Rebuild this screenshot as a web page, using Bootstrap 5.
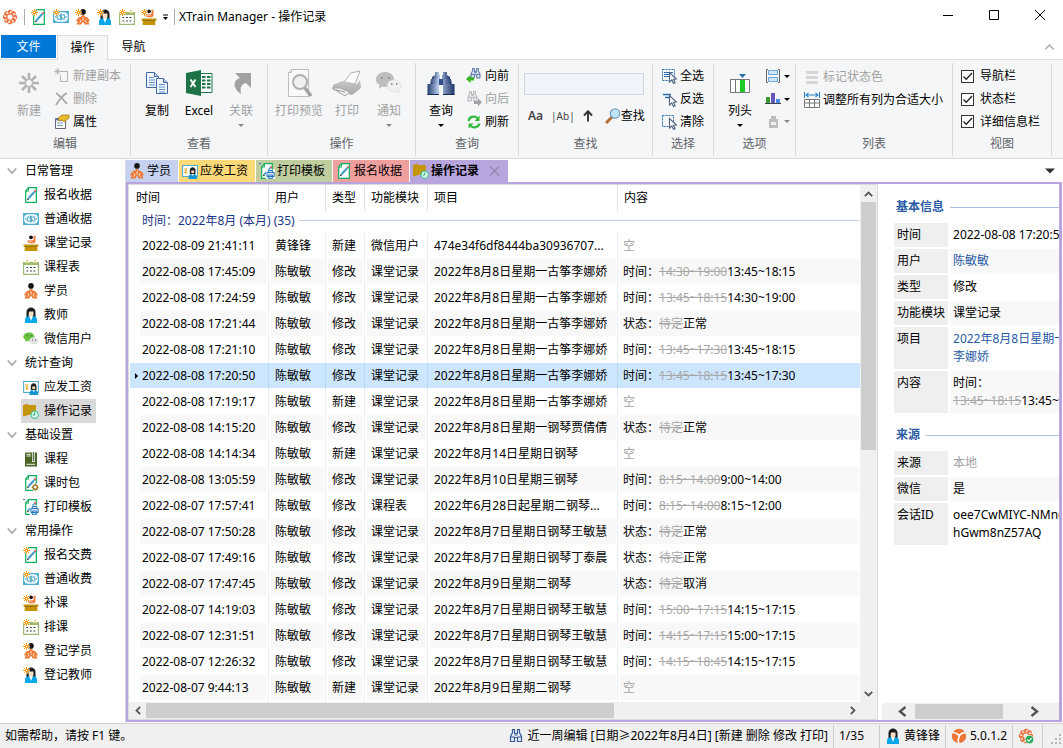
<!DOCTYPE html>
<html lang="zh-CN">
<head>
<meta charset="utf-8">
<meta name="viewport" content="width=device-width, initial-scale=1">
<title>XTrain Manager - 操作记录</title>
<link href="https://cdn.jsdelivr.net/npm/bootstrap@5.3.0/dist/css/bootstrap.min.css" rel="stylesheet">
<script defer src="https://cdn.jsdelivr.net/npm/bootstrap@5.3.0/dist/js/bootstrap.bundle.min.js"></script>
<style>
  :root { --line:#dadbdc; --accent:#b9a5de; --link:#2a5ba4; }
  body { font:12px/18px "Noto Sans","Noto Sans CJK SC",sans-serif; color:#000; background:#fff; }
  button { font:inherit; color:inherit; background:none; border:0; padding:0; white-space:nowrap; }
  a { color:var(--link); text-decoration:none; }
  svg { display:block; flex:none; }
  .s16 { width:16px; height:16px; }
  .s28 { width:28px; height:28px; }
  .titlebar { height:35px; }
  .quick { gap:6px; padding:9px 0 0 2px; }
  .vbar { width:1px; height:16px; background:#aaa; }
  .capbtn { width:46px; height:30px; }
  .rtabs { height:24px; }
  .rtab { height:24px; width:51px; position:relative; z-index:1; }
  .rtab.file { width:55px; margin:0 1px; background:#0078d7; color:#fff; height:23px; }
  .rtab.active { border:1px solid var(--line); border-bottom:0; background:#f5f6f7; height:25px; }
  .ribbon { background:#f5f6f7; border:solid var(--line); border-width:1px 0; height:100px; padding:3px 0 2px; }
  .grp { border-right:1px solid var(--line); height:93px; display:flex; flex-direction:column; flex:none; }
  .grp-main { display:flex; height:70px; padding:2px 4px 0 5px; }
  .grp-name { text-align:center; color:#5f6368; margin:auto 0 3px; }
  .big { width:42px; display:flex; flex-direction:column; align-items:center; padding-top:4px; flex:none; height:66px; }
  .big span { margin-top:5px; }
  .stack { display:flex; flex-direction:column; }
  .stack > * { height:23px; display:flex; align-items:center; gap:3px; }
  .checks > * { gap:6px; }
  .off { color:#a2a2a2; }
  .off svg { opacity:.75; }
  .caret { width:0; height:0; border:solid transparent; border-width:3px 3px 0; border-top-color:#000; flex:none; }
  .off .caret { border-top-color:#888; }
  .big .caret { margin-top:4px; }
  .find { width:120px; height:22px; border:1px solid #d5d9de; background:#eff4fb; outline:0; padding:0 4px; flex:none; }
  .find-row { gap:8px; padding-left:4px; color:#444; }
  .whole { font-size:10px; }
  .tick { appearance:none; width:13px; height:13px; border:1px solid #333; background:#fff; margin:0; border-radius:0; flex:none; }
  .tick:checked { background:#fff url("data:image/svg+xml,%3Csvg xmlns='http://www.w3.org/2000/svg' viewBox='0 0 11 11'%3E%3Cpath d='M1.5 5.5 4.3 8.3 10 2' fill='none' stroke='%23222' stroke-width='1.3'/%3E%3C/svg%3E"); }
  .tree { width:126px; flex:none; border-right:1px solid #d8dade; }
  .tree-head { height:24px; gap:8px; padding-left:7px; }
  .tree-item { height:24px; display:flex; align-items:center; gap:5px; margin-left:21px; padding:0 4px 0 2px; width:max-content; color:#000; }
  .tree-item.active { background:#d9d9d9; }
  .docs { height:23px; padding-top:1px; gap:1px; }
  .doc { height:22px; display:flex; align-items:center; gap:2px; padding:0 7px 0 3px; }
  .frame { border:2px solid var(--accent); border-width:2px 3px 2px 2px; margin-right:1px; }
  .grid-pane { border:1px solid var(--line); min-width:0; }
  .grid-box { padding-left:1px; }
  .log { width:100%; table-layout:fixed; border-collapse:separate; border-spacing:0; }
  .log th { height:26px; font-weight:400; padding:0 6px; border-right:1px solid #e2e2e2; }
  .log td { height:26px; padding:0 6px; white-space:nowrap; overflow:hidden; text-overflow:ellipsis; border-right:1px solid #e6effa; }
  .log td:last-child { padding-left:5px; }
  .log th:last-child,.log td:last-child { border-right:0; }
  .log .rows tr:nth-child(even) td { background:linear-gradient(#f8f8f8,#f8f8f8) no-repeat 2px 0/calc(100% - 3px) 25px; }
  .log .rows td:first-child { padding-left:12px; position:relative; }
  .log .rows tr:nth-child(even) td:first-child { background-position:10px 0; background-size:calc(100% - 11px) 25px; }
  .log .rows tr.sel td, .log .rows tr.sel td:first-child { background:linear-gradient(#cce6ff,#cce6ff) no-repeat 0 0/100% 25px; background-clip:border-box; background-origin:border-box; border-color:#b9d9f6; }
  .sel td:first-child::before { content:""; position:absolute; left:5px; top:10px; border:solid transparent; border-width:3px 0 3px 3px; border-left-color:#000; }
  .log .band td { padding:0 0 3px 12px; height:22px; color:#1c3687; border:0; }
  .rule { height:1px; flex:1; background:#c6d2e8; }
  .log del, .kv del { color:#a8a8a8; }
  .none { color:#a2a2a2; }
  .sb { background:#f0f0f0; display:flex; align-items:center; }
  .sb.v { width:17px; flex-direction:column; }
  .sb.h { height:17px; }
  .sb button { width:17px; height:17px; display:grid; place-items:center; flex:none; }
  .thumb { background:#cdcdcd; }
  .side { width:181px; flex:none; overflow:hidden; }
  .side-in { width:240px; padding:11px 0 0 16px; }
  .side h2 { font-size:12px; line-height:24px; font-weight:700; color:var(--link); margin:0; padding-left:2px; display:flex; align-items:center; gap:6px; height:24px; }
  .side h2::after { content:""; flex:1; height:1px; background:#a9bde0; }
  .kv { border-collapse:separate; border-spacing:0; width:224px; margin:4px 0 8px; }
  .kv th,.kv td { border:solid #fff; border-width:0 0 2px; padding:3px; vertical-align:top; }
  .kv th { font-weight:400; background:#efefef; width:56px; border-right-width:2px; white-space:nowrap; }
  .kv tr:nth-child(even) td { background:#f8f8f8; }
  .status { background:#f0f0f0; border-top:1px solid #d0d0d0; height:25px; padding-left:5px; }
  .cell { height:23px; display:flex; align-items:center; gap:3px; padding:0 5px; border-right:1px solid #ccc; flex:none; white-space:nowrap; }
</style>
</head>
<body>
<svg width="0" height="0" class="position-absolute" aria-hidden="true">
  <defs>
    <linearGradient id="steel" x2="1"><stop stop-color="#253d70"/><stop offset=".4" stop-color="#b9cdec"/><stop offset="1" stop-color="#1e3668"/></linearGradient>
    <linearGradient id="greyfade" x2="0" y2="1"><stop stop-color="#b9b9b9"/><stop offset="1" stop-color="#8f8f8f"/></linearGradient>
    <path id="blade" d="M6.300 4.600C4.600 3.300 5.500.9 8.200.8c1.400 0 2 .7 2.100 1.300-1.700-.5-2.600.5-2.300 2z"/>
  </defs>
  <symbol id="spark" viewBox="0 0 16 16"><path d="M3.500 0v7M0 3.500h7M1 1l5 5M6 1 1 6" stroke="#fff" stroke-width="2.200" opacity=".6"/><path d="M3.500 0v7M0 3.500h7M1 1l5 5M6 1 1 6" stroke="#f5a11c"/><path d="M3 3h1v1H3z" fill="#fff"/></symbol>
  <symbol id="receipt" viewBox="0 0 16 16"><path d="M5.500.7h7.800v14.600H2.700V4z" fill="#fff" stroke="#0caf5a" stroke-width="1.200"/><path d="M2.700 4.200h2.800V.7" fill="none" stroke="#0caf5a" stroke-width=".9"/><path d="m5.300 11.500 6-6.500" stroke="#3b9cc9" stroke-width="1.900"/><path d="m11.500 4.800 1.200-1.300" stroke="#c05a62" stroke-width="1.900"/><path d="m4 13.200.6-2 1.400 1.300z" fill="#111"/></symbol>
  <symbol id="money" viewBox="0 0 16 16"><path d="M.6 2.600h14.800v10.800H.6z" fill="#f2fafd" stroke="#4fadcf" stroke-width="1.100"/><path d="M1 3h2.500v1H2v1.500H1zM15 3h-2.500v1H14v1.500h1zM1 13h2.500v-1H2v-1.500H1zM15 13h-2.500v-1H14v-1.500h1z" fill="#4fadcf"/><path d="M5.500 5 3.900 8l1.600 3M10.500 5l1.600 3-1.600 3" fill="none" stroke="#4fadcf" stroke-width="1.200"/><path d="M9.700 6.200C8 5.200 6.300 6 6.500 7S9.500 8 9.500 9.200 7.500 10.500 6.200 9.700M8 4.700v6.600" fill="none" stroke="#2f97bd"/><path d="M2 8h1M13 8h1" stroke="#2f97bd"/></symbol>
  <symbol id="class" viewBox="0 0 16 16"><circle cx="8" cy="2.300" r="1.900" fill="#111"/><path d="M4.500 5.500 10.500 5V.8h2v6l-1.500 1.500H7L4.500 7z" fill="#ef7a3a"/><path d="M6 6.200h4" stroke="#fff" stroke-width=".6"/><path d="M.5 9.500h15v2h-1.200V16H1.700v-4.500H.5z" fill="#c49408"/><path d="M1.700 11.500h12.600" stroke="#8f6b00" stroke-width=".8"/></symbol>
  <symbol id="cal" viewBox="0 0 16 16"><path d="M.6 3.500h14.800v11.900H.6z" fill="#fff" stroke="#9cb872" stroke-width="1.200"/><path d="M.6 3h14.800v3H.6z" fill="#9dbb69"/><path d="M4 .5v3.500M12 .5v3.500" stroke="#fff" stroke-width="3"/><path d="M4 .5V4M12 .5V4" stroke="#e3c970" stroke-width="1.400"/><path d="M3.500 8.500h9.500M3.500 12h9.500" stroke="#333" stroke-width="1.200" stroke-dasharray="1.800 1.700"/></symbol>
  <symbol id="stud" viewBox="0 0 16 16"><circle cx="8" cy="2.900" r="2.800" fill="#151515"/><path d="M8 6c1 0 1.600.8 2 1.800l2.200.4c1.300 1 2.300 2.800 2.800 4.300l-2-.3 1.500 3.300H9.800L8 12.500l-1.800 3H1.500L3 12.200l-2 .3c.5-1.500 1.500-3.300 2.800-4.300L6 7.800C6.400 6.800 7 6 8 6z" fill="#ee7832"/><path d="m4.500 10 1.500 1.800-1.500 2M11.500 10 10 11.800l1.500 2M8 8v3.500" fill="none" stroke="#fff" stroke-width=".8"/></symbol>
  <symbol id="teach" viewBox="0 0 16 16"><path d="M3.500 10V5C3.500-1 12.500-1 12.500 5v5z" fill="#1b1b1b"/><path d="M6 4.500h4.500V8L9.500 10h-3L5.500 8z" fill="#f7dfc6"/><path d="M2 16v-3.500c0-2 1.800-3.200 3.800-3.200L8 12l2.200-2.700c2 0 3.800 1.200 3.800 3.200V16z" fill="#08a7ec"/><path d="M6.300 9.300 8 14l1.700-4.700z" fill="#fff"/></symbol>
  <symbol id="chat" viewBox="0 0 16 16"><path d="M6 1.500c3 0 5.500 2 5.500 4.300S9 10 6 10l-1.500-.2L2.200 11l.5-2C1.200 8.200.3 7.200.3 5.800c0-2.300 2.500-4.300 5.700-4.300z" fill="#69c13f"/><path d="M10.800 6.200c2.700 0 4.700 1.600 4.700 3.600 0 1.200-.7 2-1.600 2.700l.3 1.500-1.700-.9c-3.500.9-6.200-1-6.200-3.300 0-2 2-3.600 4.500-3.600z" fill="#e4e4e4"/><path d="M4 4.700h1M7.500 4.700h1M9 9h1M12 9h1" stroke="#444"/></symbol>
  <symbol id="salary" viewBox="0 0 16 16"><path d="M.6 2.500h14.800v11H.6z" fill="#fff" stroke="#54add0" stroke-width="1.100"/><path d="m2.500 5 1.300 2L5 5M3.800 7v4M2.500 8h2.700M2.500 9.500h2.700" stroke="#efa523" fill="none" stroke-width=".9"/><path d="M7.800 11V7.500c0-4.300 5.700-4.300 5.700 0V11z" fill="#222"/><path d="M9.300 7.500h2.800v2.500H9.300z" fill="#f7dfc6"/><path d="M6.500 16v-3l2.500-2.300 1.700 2 1.700-2L15 13v3z" fill="#1696cf"/></symbol>
  <symbol id="folder" viewBox="0 0 16 16"><path d="M0 2 4.500.8 5.500 2H13v8L0 13.500z" fill="#c5950a"/><circle cx="11.700" cy="11.700" r="3.600" fill="#e8fff5" stroke="#46c796" stroke-width="1.200"/><path d="M11.700 9.500v2.500h-2" fill="none" stroke="#1b9b6d"/></symbol>
  <symbol id="book" viewBox="0 0 16 16"><path d="M2 1.500h12v14H2z" fill="#4d6427"/><path d="M3.500 3.300h4.300M3.500 5h4.300M3.500 13.300h8.500" stroke="#fff" stroke-width=".9"/><path d="M10.500 0v11" stroke="#fff" stroke-width="2.600"/><path d="M10.500 1v9" stroke="#58714b" stroke-width="1.200"/></symbol>
  <symbol id="pack" viewBox="0 0 16 16"><use href="#receipt"/><circle cx="12.200" cy="12.200" r="3.700" fill="#fff"/><circle cx="12.200" cy="12.200" r="2.100" fill="none" stroke="#96701a" stroke-width="1.300"/><path d="M12.200 8.700v1.500M12.200 14.200v1.500M8.700 12.200h1.500M14.200 12.200h1.500M9.800 9.800l1 1M13.600 13.600l1 1M14.600 9.800l-1 1M10.800 13.600l-1 1" stroke="#96701a"/></symbol>
  <symbol id="tmpl" viewBox="0 0 16 16"><use href="#receipt"/><path d="M6.800 6.500H16V16H6.800z" fill="#fff"/><path d="M9.300 9.500v-2h4.400v2M7.900 9.500h7.300v4H7.900zM9.300 12h4.400v3.300H9.300z" fill="#dceefb" stroke="#2675b8"/><path d="M0 .6h2" stroke="#2675b8"/></symbol>
  <symbol id="logo" viewBox="0 0 16 16"><g fill="#ec7340"><use href="#blade"/><use href="#blade" transform="rotate(45 8 8)"/><use href="#blade" transform="rotate(90 8 8)"/><use href="#blade" transform="rotate(135 8 8)"/><use href="#blade" transform="rotate(180 8 8)"/><use href="#blade" transform="rotate(225 8 8)"/><use href="#blade" transform="rotate(270 8 8)"/><use href="#blade" transform="rotate(315 8 8)"/></g><circle cx="8" cy="8" r="3.200" fill="none" stroke="#ec7340" stroke-width="1.300"/></symbol>
  <symbol id="bino" viewBox="0 0 28 28"><path d="M8 3h4v3h1v5H5V8l3-2zM16 3h4v3l3 2v3h-8V6h1z" fill="url(#steel)"/><path d="M4 10h8.500v6H3zM15.500 10H24l1 6h-9.500z" fill="url(#steel)"/><path d="M12 10h4v6h-4z" fill="#34508a"/><path d="M.5 15H12v11H.5zM16 15h11.500v11H16z" fill="url(#steel)"/><path d="M.5 25.500H12M16 25.500h11.500" stroke="#142a58"/></symbol>
  <symbol id="binoline" viewBox="0 0 16 16"><path d="M4.500 1.500h2v4h3v-4h2v3l2 4v5h-4V9.500h-3v4h-4v-5l2-4zM2.500 9h4M9.500 9h4M6.500 7h3" fill="#e6ecf7" stroke="currentColor" stroke-width="1.200"/></symbol>
  <symbol id="cursor" viewBox="0 0 16 16"><path d="M8.500 4.500v9.500l2.300-2 1.700 3.500 1.600-.8-1.700-3.400 3-.3z" fill="#fff" stroke="#52677f" stroke-width="1.100"/></symbol>
  <symbol id="chev" viewBox="0 0 10 8"><path d="m.8 1.500 4.200 4.500 4.200-4.500" fill="none" stroke="#a8a8a8" stroke-width="1.800"/></symbol>
</svg>

<div class="d-flex flex-column vh-100 overflow-hidden">
  <header class="titlebar d-flex align-items-start flex-shrink-0">
    <div class="quick d-flex align-items-center">
      <svg class="s16"><use href="#logo"/></svg>
      <span class="vbar"></span>
      <button aria-label="报名交费"><svg class="s16"><use href="#receipt"/><use href="#spark"/></svg></button>
      <button aria-label="普通收费"><svg class="s16"><use href="#money"/><use href="#spark"/></svg></button>
      <button aria-label="登记学员"><svg class="s16"><use href="#stud"/><use href="#spark"/></svg></button>
      <button aria-label="登记教师"><svg class="s16"><use href="#teach"/><use href="#spark"/></svg></button>
      <button aria-label="排课"><svg class="s16"><use href="#cal"/><use href="#spark"/></svg></button>
      <button aria-label="补课"><svg class="s16"><use href="#class"/><use href="#spark"/></svg></button>
      <button aria-label="自定义"><svg width="5" height="7" viewBox="0 0 6 7"><path d="M0 .5h6" stroke="#000" stroke-width="1.200"/><path d="M0 3h6L3 6.500z"/></svg></button>
      <span class="vbar"></span>
    </div>
    <div class="ps-1 pt-2">XTrain Manager - 操作记录</div>
    <div class="ms-auto d-flex">
      <button class="capbtn d-grid" aria-label="最小化"><svg class="m-auto" width="10" height="10"><path d="M0 5.500h10" stroke="#000"/></svg></button>
      <button class="capbtn d-grid" aria-label="最大化"><svg class="m-auto" width="10" height="10"><path d="M.5.5h9v9h-9z" fill="none" stroke="#000"/></svg></button>
      <button class="capbtn d-grid" aria-label="关闭"><svg class="m-auto" width="10" height="10"><path d="m0 0 10 10M10 0 0 10" stroke="#000"/></svg></button>
    </div>
  </header>

  <nav class="rtabs d-flex flex-shrink-0">
    <button class="rtab file">文件</button>
    <button class="rtab active">操作</button>
    <button class="rtab">导航</button>
    <button class="ms-auto pe-2" aria-label="折叠功能区"><svg width="11" height="8" viewBox="0 0 10 8"><path d="m.8 6.500 4.200-4.500 4.200 4.500" fill="none" stroke="#b4b4b4" stroke-width="1.800"/></svg></button>
  </nav>

  <section class="ribbon d-flex flex-shrink-0">
    <div class="grp" style="width:131px">
      <div class="grp-main ps-2">
        <button class="big off"><svg class="s28" viewBox="0 0 28 28"><g stroke="#9c9c9c" stroke-width="2.600"><path d="M14 4v7M14 17v7M4 14h7M17 14h7M7 7l5 5M16 16l5 5M21 7l-5 5M12 16l-5 5"/></g></svg><span>新建</span></button>
        <div class="stack ms-1">
          <button class="off"><svg class="s16"><path d="M6.500 3.500h7v10h-7v-6" fill="none" stroke="#999"/><path d="M3.500 0v7M0 3.500h7M1 1l5 5M6 1 1 6" stroke="#999" stroke-width=".8"/></svg>新建副本</button>
          <button class="off"><svg class="s16"><path d="M2 2c3 2 8 7 11 11M13 2C9 4 5 9 2 14" fill="none" stroke="#8f8f8f" stroke-width="1.800"/></svg>删除</button>
          <button><svg class="s16"><path d="M1.500 4.500h10v10h-10z" fill="#fff" stroke="#667"/><path d="M1.500 5.500h10" stroke="#4b7bc0" stroke-width="2"/><path d="M3 9h6M3 11.500h6" stroke="#7892bd"/><path d="m4 4 4-3h7v3l-5 4-2-2-3 1z" fill="#e6bb2e" stroke="#a77400" stroke-width=".7"/></svg>属性</button>
        </div>
      </div>
      <div class="grp-name">编辑</div>
    </div>

    <div class="grp" style="width:137px">
      <div class="grp-main">
        <button class="big"><svg class="s28" viewBox="0 0 28 28"><g fill="#f1f6fe" stroke="#4269a5"><path d="M3.500 3.500h8l4 4v11h-12z"/><path d="M13.500 9.500h7l4 4v11h-11z"/><path d="M20.500 9.500v4h4M11.500 3.500v4h4" fill="#b9d0f0"/></g><path d="M6 8.500h5M6 11h6M6 13.500h6M6 16h6M16 15.500h6M16 18h6M16 20.500h6M16 23h6" stroke="#5a8cd0"/></svg><span>复制</span></button>
        <button class="big"><svg class="s28" viewBox="0 0 28 28"><path d="M15 4.500h12v19H15z" fill="#fff" stroke="#1f7246"/><path d="M17 8h3.500M17 11.500h3.500M17 15h3.500M17 18.500h3.500M22 8h3.500M22 11.500h3.500M22 15h3.500M22 18.500h3.500" stroke="#1f7246" stroke-width="2"/><path d="M1 4 16 1v26L1 24z" fill="#1f7246"/><path d="m5.500 10.500 5 7.500M10.500 10.500l-5 7.500" stroke="#fff" stroke-width="1.900"/></svg><span>Excel</span></button>
        <button class="big off"><svg class="s28" viewBox="0 0 28 28"><path d="M8 4h16v15l-5-5c-5 1-6 5-5 11-9-6-8-14-1-16z" fill="#858585"/></svg><span>关联</span><i class="caret"></i></button>
      </div>
      <div class="grp-name">查看</div>
    </div>

    <div class="grp" style="width:148px">
      <div class="grp-main ps-1">
        <button class="big off" style="width:54px"><svg class="s28" viewBox="0 0 28 28"><path d="M6.500.5h17v27h-20v-24z" fill="#fafafa" stroke="#aaa"/><path d="M6.500.5v3h-3" fill="none" stroke="#aaa"/><circle cx="15" cy="13" r="7" fill="#eee" stroke="#999" stroke-width="2"/><path d="m20 19 6 8" stroke="#888" stroke-width="3.500"/></svg><span>打印预览</span></button>
        <button class="big off"><svg width="32" height="28" viewBox="0 0 32 28"><path d="m13 13 7-9 9-2-5 13z" fill="#fff" stroke="#999"/><path d="m2 16 9-4 15 3 3-4 1 8-9 7-19-5z" fill="url(#greyfade)"/><path d="m1 19 8 0 10 4-5 4z" fill="#eee" stroke="#888"/><path d="m5 21 9 2" stroke="#777"/></svg><span>打印</span></button>
        <button class="big off"><svg class="s28" viewBox="0 0 28 28"><path d="M10 3c5 0 9 3 9 7.500S15 18 10 18l-3-.5L4 20l.5-4C2 14.500 1 13 1 10.500 1 6 5 3 10 3z" fill="#aaa"/><path d="M19 11c4 0 7 2.500 7 6 0 2-1 3.500-2.500 4.500l.5 2.500-3-1.500c-5 1-9-1.500-9-5.500 0-3.500 3-6 7-6z" fill="#eee" stroke="#ccc" stroke-width=".6"/><path d="M6 9h2M13 9h2M16 15h1.500M21 15h1.500" stroke="#777" stroke-width="2"/></svg><span>通知</span><i class="caret"></i></button>
      </div>
      <div class="grp-name">操作</div>
    </div>

    <div class="grp" style="width:103px">
      <div class="grp-main ps-1">
        <button class="big"><svg class="s28"><use href="#bino"/></svg><span>查询</span><i class="caret"></i></button>
        <div class="stack ms-1">
          <button><svg class="s16" color="#4965a0"><use href="#binoline" x="3" y="-1" width="13" height="13"/><path d="m0 11 4.500-4v2.500H8v3H4.500V15z" fill="#36b41c"/></svg>向前</button>
          <button class="off"><svg class="s16" color="#999"><use href="#binoline" y="-1" width="13" height="13"/><path d="m16 11-4-3.500V10H8v3h4v2.500z" fill="#888"/></svg>向后</button>
          <button><svg class="s16"><path d="M2.500 7C3 3 8 1 11.500 4M13.500 9.500c-1 4-6 5-9 2.500" fill="none" stroke="#35b93a" stroke-width="2.200"/><path d="M13.500 1.500v5.500H8.500zM2.500 14.500V9.500h5z" fill="#35b93a"/></svg>刷新</button>
        </div>
      </div>
      <div class="grp-name">查询</div>
    </div>

    <div class="grp" style="width:134px">
      <div class="grp-main flex-column">
        <input class="find mt-2" aria-label="查找内容">
        <div class="find-row d-flex align-items-center mt-2 pt-1">
          <button class="fw-semibold" aria-label="区分大小写">Aa</button>
          <button class="whole" aria-label="全字匹配">|Ab|</button>
          <button class="me-1" aria-label="向上"><svg width="10" height="12"><path d="M5 11.500V1.500M1 5.500l4-4.300 4 4.300" fill="none" stroke="#333" stroke-width="1.900"/></svg></button>
          <button class="d-flex align-items-center text-black"><svg class="s16"><path d="m7 9-6 6" stroke="#b16c38" stroke-width="3"/><circle cx="10" cy="5.500" r="4.700" fill="#bde6fc" stroke="#7f9fc0" stroke-width="1.300"/></svg>查找</button>
        </div>
      </div>
      <div class="grp-name">查找</div>
    </div>

    <div class="grp" style="width:61px">
      <div class="grp-main ps-2">
        <div class="stack">
          <button><svg class="s16"><path d="M1.500 1.500h12v11h-12z" fill="none" stroke="#2b6fae" stroke-dasharray="2 1"/><path d="M3 4.500h9M3 6.500h6M3 8.500h5" stroke="#2b6fae"/><use href="#cursor"/></svg>全选</button>
          <button><svg class="s16"><path d="M2 3.500h8M4 6.500h6" stroke="#2b6fae" stroke-width="1.400"/><use href="#cursor"/></svg>反选</button>
          <button><svg class="s16"><path d="M1.500 1.500h11v11h-11z" fill="none" stroke="#2b6fae" stroke-dasharray="2 1"/><use href="#cursor"/></svg>清除</button>
        </div>
      </div>
      <div class="grp-name">选择</div>
    </div>

    <div class="grp" style="width:82px">
      <div class="grp-main">
        <button class="big"><svg class="s28" viewBox="0 0 28 28"><path d="M13 5h7l-3.500 4z" fill="#2b71b2"/><path d="M4.500 10.500h19v13h-19z" fill="#fff" stroke="#777"/><path d="M9.500 10v14M18.500 10v14" stroke="#777"/><path d="M14 11h5v12h-5z" fill="#20c926"/></svg><span>列头</span><i class="caret"></i></button>
        <div class="stack ms-1">
          <button aria-label="分组"><svg class="s16"><path d="M3 1.500H1.500v13H3M13 1.500h1.500v13H13" fill="none" stroke="#666"/><path d="M3.500 2.500h9v4h-9zM3.500 9.500h9v4h-9z" fill="#cfe6fa" stroke="#6aa4d8"/></svg><i class="caret"></i></button>
          <button aria-label="图表"><svg class="s16"><path d="M1 6h4v6H1z" fill="#3c9631"/><path d="M6 2h4v10H6z" fill="#6357b8"/><path d="M11 8h4v4h-4z" fill="#4c8ce4"/><path d="M0 12.500h16" stroke="#345"/></svg><i class="caret"></i></button>
          <button class="off" aria-label="标记"><svg class="s16"><path d="M6 2h5v3h2v9H4V5h2z" fill="#aaa"/><path d="M6 8h5v3H6z" fill="#eee"/></svg><i class="caret"></i></button>
        </div>
      </div>
      <div class="grp-name">选项</div>
    </div>

    <div class="grp" style="width:157px">
      <div class="grp-main ps-2">
        <div class="stack">
          <button class="off"><svg class="s16"><path d="M2 3.500h12M2 8.500h12M2 13.500h12" stroke="#ccc" stroke-width="3"/></svg>标记状态色</button>
          <button><svg class="s16"><path d="M.5 0v6M15.500 0v6M2 3h12M4.500.8 2 3l2.500 2.200M11.500.8 14 3l-2.500 2.200" fill="none" stroke="#2b83c8" stroke-width="1.100"/><path d="M.5 7.500h15v8H.5zM.5 11h15M5.500 8v8M10.500 8v8" fill="#fff" stroke="#777"/></svg>调整所有列为合适大小</button>
        </div>
      </div>
      <div class="grp-name">列表</div>
    </div>

    <div class="grp" style="width:99px">
      <div class="grp-main ps-2">
        <div class="stack checks">
          <label><input class="tick" type="checkbox" checked>导航栏</label>
          <label><input class="tick" type="checkbox" checked>状态栏</label>
          <label><input class="tick" type="checkbox" checked>详细信息栏</label>
        </div>
      </div>
      <div class="grp-name">视图</div>
    </div>
  </section>

  <main class="d-flex flex-grow-1" style="min-height:0">
    <nav class="tree">
      <div class="tree-head d-flex align-items-center"><svg width="10" height="8"><use href="#chev"/></svg>日常管理</div>
      <a class="tree-item" href="#"><svg class="s16"><use href="#receipt"/></svg>报名收据</a>
      <a class="tree-item" href="#"><svg class="s16"><use href="#money"/></svg>普通收据</a>
      <a class="tree-item" href="#"><svg class="s16"><use href="#class"/></svg>课堂记录</a>
      <a class="tree-item" href="#"><svg class="s16"><use href="#cal"/></svg>课程表</a>
      <a class="tree-item" href="#"><svg class="s16"><use href="#stud"/></svg>学员</a>
      <a class="tree-item" href="#"><svg class="s16"><use href="#teach"/></svg>教师</a>
      <a class="tree-item" href="#"><svg class="s16"><use href="#chat"/></svg>微信用户</a>
      <div class="tree-head d-flex align-items-center"><svg width="10" height="8"><use href="#chev"/></svg>统计查询</div>
      <a class="tree-item" href="#"><svg class="s16"><use href="#salary"/></svg>应发工资</a>
      <a class="tree-item active" href="#"><svg class="s16"><use href="#folder"/></svg>操作记录</a>
      <div class="tree-head d-flex align-items-center"><svg width="10" height="8"><use href="#chev"/></svg>基础设置</div>
      <a class="tree-item" href="#"><svg class="s16"><use href="#book"/></svg>课程</a>
      <a class="tree-item" href="#"><svg class="s16"><use href="#pack"/></svg>课时包</a>
      <a class="tree-item" href="#"><svg class="s16"><use href="#tmpl"/></svg>打印模板</a>
      <div class="tree-head d-flex align-items-center"><svg width="10" height="8"><use href="#chev"/></svg>常用操作</div>
      <a class="tree-item" href="#"><svg class="s16"><use href="#receipt"/><use href="#spark"/></svg>报名交费</a>
      <a class="tree-item" href="#"><svg class="s16"><use href="#money"/><use href="#spark"/></svg>普通收费</a>
      <a class="tree-item" href="#"><svg class="s16"><use href="#class"/><use href="#spark"/></svg>补课</a>
      <a class="tree-item" href="#"><svg class="s16"><use href="#cal"/><use href="#spark"/></svg>排课</a>
      <a class="tree-item" href="#"><svg class="s16"><use href="#stud"/><use href="#spark"/></svg>登记学员</a>
      <a class="tree-item" href="#"><svg class="s16"><use href="#teach"/><use href="#spark"/></svg>登记教师</a>
    </nav>

    <div class="d-flex flex-column flex-grow-1" style="min-width:0">
      <div class="docs d-flex flex-shrink-0">
        <button class="doc" style="background:#c6d0f1"><svg class="s16"><use href="#stud"/></svg>学员</button>
        <button class="doc" style="background:#fed978"><svg class="s16"><use href="#salary"/></svg>应发工资</button>
        <button class="doc" style="background:#bfcd9f"><svg class="s16"><use href="#tmpl"/></svg>打印模板</button>
        <button class="doc" style="background:#f09f9f"><svg class="s16"><use href="#receipt"/></svg>报名收据</button>
        <button class="doc fw-bold pe-1" style="background:#b9a5de"><svg class="s16"><use href="#folder"/></svg>操作记录<svg class="ms-2 me-1" width="11" height="10"><path d="m1 .5 9 9M10 .5l-9 9" stroke="#968bb0" stroke-width="1.500"/></svg></button>
        <button class="ms-auto me-2" aria-label="标签列表"><svg width="10" height="6"><path d="M0 .5h10L5 5.500z" fill="#333"/></svg></button>
      </div>
      <div class="frame d-flex flex-grow-1" style="min-height:0">
        <div class="grid-pane d-flex flex-column flex-grow-1">
          <div class="d-flex flex-grow-1" style="min-height:0">
            <div class="grid-box flex-grow-1 overflow-hidden">
              <table class="log">
                <colgroup><col style="width:139px"><col style="width:57px"><col style="width:39px"><col style="width:63px"><col style="width:190px"><col></colgroup>
                <thead><tr><th>时间</th><th>用户</th><th>类型</th><th>功能模块</th><th>项目</th><th>内容</th></tr></thead>
                <tbody class="band"><tr><td colspan="6"><div class="d-flex align-items-center gap-1">时间：2022年8月 (本月) (35)<span class="rule"></span></div></td></tr></tbody>
                <tbody class="rows">
                  <tr><td>2022-08-09 21:41:11</td><td>黄锋锋</td><td>新建</td><td>微信用户</td><td>474e34f6df8444ba30936707...</td><td class="none">空</td></tr>
                  <tr><td>2022-08-08 17:45:09</td><td>陈敏敏</td><td>修改</td><td>课堂记录</td><td>2022年8月8日星期一古筝李娜娇</td><td>时间：<del>14:30~19:00</del>13:45~18:15</td></tr>
                  <tr><td>2022-08-08 17:24:59</td><td>陈敏敏</td><td>修改</td><td>课堂记录</td><td>2022年8月8日星期一古筝李娜娇</td><td>时间：<del>13:45~18:15</del>14:30~19:00</td></tr>
                  <tr><td>2022-08-08 17:21:44</td><td>陈敏敏</td><td>修改</td><td>课堂记录</td><td>2022年8月8日星期一古筝李娜娇</td><td>状态：<del>待定</del>正常</td></tr>
                  <tr><td>2022-08-08 17:21:10</td><td>陈敏敏</td><td>修改</td><td>课堂记录</td><td>2022年8月8日星期一古筝李娜娇</td><td>时间：<del>13:45~17:30</del>13:45~18:15</td></tr>
                  <tr class="sel"><td>2022-08-08 17:20:50</td><td>陈敏敏</td><td>修改</td><td>课堂记录</td><td>2022年8月8日星期一古筝李娜娇</td><td>时间：<del>13:45~18:15</del>13:45~17:30</td></tr>
                  <tr><td>2022-08-08 17:19:17</td><td>陈敏敏</td><td>新建</td><td>课堂记录</td><td>2022年8月8日星期一古筝李娜娇</td><td class="none">空</td></tr>
                  <tr><td>2022-08-08 14:15:20</td><td>陈敏敏</td><td>修改</td><td>课堂记录</td><td>2022年8月8日星期一钢琴贾倩倩</td><td>状态：<del>待定</del>正常</td></tr>
                  <tr><td>2022-08-08 14:14:34</td><td>陈敏敏</td><td>新建</td><td>课堂记录</td><td>2022年8月14日星期日钢琴</td><td class="none">空</td></tr>
                  <tr><td>2022-08-08 13:05:59</td><td>陈敏敏</td><td>修改</td><td>课堂记录</td><td>2022年8月10日星期三钢琴</td><td>时间：<del>8:15~14:00</del>9:00~14:00</td></tr>
                  <tr><td>2022-08-07 17:57:41</td><td>陈敏敏</td><td>修改</td><td>课程表</td><td>2022年6月28日起星期二钢琴...</td><td>时间：<del>8:15~14:00</del>8:15~12:00</td></tr>
                  <tr><td>2022-08-07 17:50:28</td><td>陈敏敏</td><td>修改</td><td>课堂记录</td><td>2022年8月7日星期日钢琴王敏慧</td><td>状态：<del>待定</del>正常</td></tr>
                  <tr><td>2022-08-07 17:49:16</td><td>陈敏敏</td><td>修改</td><td>课堂记录</td><td>2022年8月7日星期日钢琴丁泰晨</td><td>状态：<del>待定</del>正常</td></tr>
                  <tr><td>2022-08-07 17:47:45</td><td>陈敏敏</td><td>修改</td><td>课堂记录</td><td>2022年8月9日星期二钢琴</td><td>状态：<del>待定</del>取消</td></tr>
                  <tr><td>2022-08-07 14:19:03</td><td>陈敏敏</td><td>修改</td><td>课堂记录</td><td>2022年8月7日星期日钢琴王敏慧</td><td>时间：<del>15:00~17:15</del>14:15~17:15</td></tr>
                  <tr><td>2022-08-07 12:31:51</td><td>陈敏敏</td><td>修改</td><td>课堂记录</td><td>2022年8月7日星期日钢琴王敏慧</td><td>时间：<del>14:15~17:15</del>15:00~17:15</td></tr>
                  <tr><td>2022-08-07 12:26:32</td><td>陈敏敏</td><td>修改</td><td>课堂记录</td><td>2022年8月7日星期日钢琴王敏慧</td><td>时间：<del>14:15~18:45</del>14:15~17:15</td></tr>
                  <tr><td>2022-08-07 9:44:13</td><td>陈敏敏</td><td>新建</td><td>课堂记录</td><td>2022年8月9日星期二钢琴</td><td class="none">空</td></tr>
                </tbody>
              </table>
            </div>
            <div class="sb v">
              <button aria-label="向上滚动"><svg width="9" height="6"><path d="M.8 5.200 4.500 1.500l3.700 3.700" fill="none" stroke="#555" stroke-width="1.800"/></svg></button>
              <div class="thumb" style="width:15px;height:48%"></div>
              <button class="mt-auto" aria-label="向下滚动"><svg width="9" height="6"><path d="m.8.8 3.700 3.700L8.200.8" fill="none" stroke="#555" stroke-width="1.800"/></svg></button>
            </div>
          </div>
          <div class="sb h pe-3">
            <button aria-label="向左滚动"><svg width="6" height="9"><path d="M5.200.8 1.500 4.500l3.700 3.700" fill="none" stroke="#555" stroke-width="1.800"/></svg></button>
            <div class="thumb" style="width:64%;height:15px"></div>
            <button class="ms-auto" aria-label="向右滚动"><svg width="6" height="9"><path d="m.8.8 3.700 3.700L.8 8.200" fill="none" stroke="#555" stroke-width="1.800"/></svg></button>
          </div>
        </div>

        <aside class="side d-flex flex-column">
          <div class="side-in flex-grow-1">
            <h2>基本信息</h2>
            <table class="kv">
              <tr><th>时间</th><td>2022-08-08 17:20:50</td></tr>
              <tr><th>用户</th><td><a href="#">陈敏敏</a></td></tr>
              <tr><th>类型</th><td>修改</td></tr>
              <tr><th>功能模块</th><td>课堂记录</td></tr>
              <tr><th>项目</th><td><a href="#">2022年8月8日星期一古筝<br>李娜娇</a></td></tr>
              <tr><th>内容</th><td>时间：<br><del>13:45~18:15</del>13:45~17:30</td></tr>
            </table>
            <h2>来源</h2>
            <table class="kv">
              <tr><th>来源</th><td class="none">本地</td></tr>
              <tr><th>微信</th><td>是</td></tr>
              <tr><th>会话ID</th><td>oee7CwMIYC-NMnq<br>hGwm8nZ57AQ</td></tr>
            </table>
          </div>
          <div class="sb h ms-1 ps-2">
            <button class="ms-1" aria-label="向左滚动"><svg width="9" height="11"><path d="M7.500 1 2 5.500 7.500 10" fill="none" stroke="#555" stroke-width="2.400"/></svg></button>
            <div class="thumb ms-1" style="width:52%;height:15px"></div>
            <button class="ms-auto me-3" aria-label="向右滚动"><svg width="9" height="11"><path d="M1.500 1 7 5.500 1.500 10" fill="none" stroke="#555" stroke-width="2.400"/></svg></button>
          </div>
        </aside>
      </div>
      <div style="height:1px"></div>
    </div>
  </main>

  <footer class="status d-flex align-items-center flex-shrink-0">
    <span>如需帮助，请按 F1 键。</span>
    <div class="cell ms-auto"><svg class="s16" color="#3a5a98"><use href="#binoline"/></svg>近一周编辑 [日期≥2022年8月4日] [新建 删除 修改 打印]</div>
    <div class="cell" style="width:46px">1/35</div>
    <div class="cell" style="width:66px"><svg class="s16"><use href="#teach"/></svg>黄锋锋</div>
    <div class="cell" style="width:67px"><svg class="s16" viewBox="0 0 16 16"><circle cx="8" cy="8" r="7.200" fill="#ea7636"/><path d="M1.500 4.500C4.500 4.800 7 5.500 8.300 8M14.500 4.700C11.500 5 9 6 8.300 8c-1.200 2.500-1.300 5-.6 7.500" fill="none" stroke="#fff" stroke-width="1.700"/></svg>5.0.1.2</div>
    <div class="cell" style="width:30px"><svg class="s16"><use href="#logo"/><circle cx="11.500" cy="11.500" r="4.200" fill="#22aa56" stroke="#fff" stroke-width=".6"/><path d="m9.300 11.500 1.700 1.700 2.700-3" fill="none" stroke="#fff" stroke-width="1.200"/></svg></div>
    <svg class="ms-2 mt-2" width="12" height="12"><path d="M8 0h2v2H8zM4 4h2v2H4zM8 4h2v2H8zM0 8h2v2H0zM4 8h2v2H4zM8 8h2v2H8z" fill="#b6b6b6"/></svg>
  </footer>
</div>
</body>
</html>
